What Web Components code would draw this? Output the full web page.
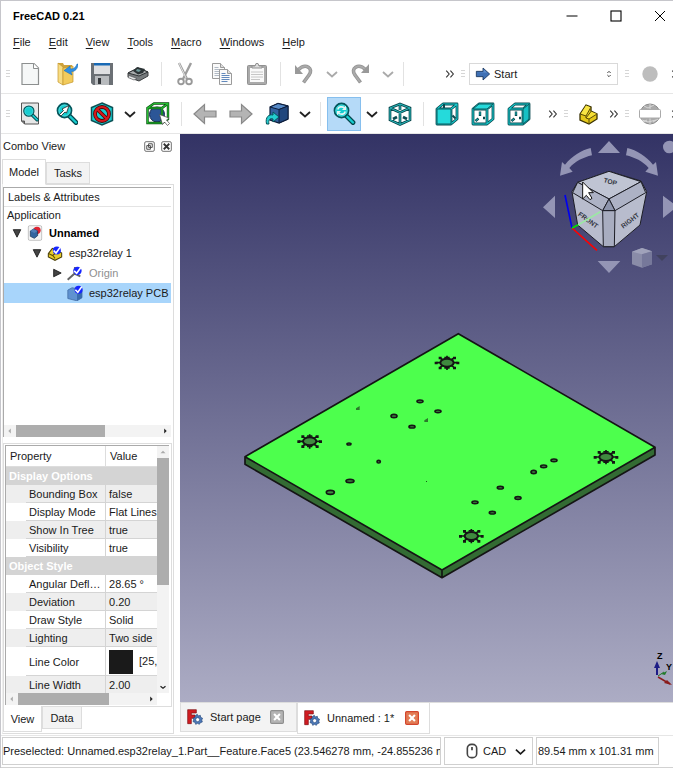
<!DOCTYPE html>
<html lang="en">
<head>
<meta charset="utf-8">
<title>FreeCAD 0.21</title>
<style>
html,body{margin:0;background:#fff}
body{font:11px/16px "Liberation Sans",Arial,sans-serif;color:#1a1a1a}
</style>
</head>
<body>
<fc-app></fc-app>
<script>
const RESET = `*,:host{box-sizing:border-box}button,select{font:inherit;color:inherit;background:none;border:0;padding:0;margin:0}`;
function define(name, html, setup) {
  const t = document.createElement('template');
  t.innerHTML = html.replace('<style>', '<style>' + RESET);
  customElements.define(name, class extends HTMLElement {
    constructor() {
      super();
      this.attachShadow({ mode: 'open' }).append(t.content.cloneNode(true));
    }
    connectedCallback() { if (setup) setup(this, this.shadowRoot); }
  });
}

const T = '#17cdd0', D = '#0b4a50';
const glass = `<path d="M14 13.500L21 20.500" stroke="#04464c" stroke-width="4.800" stroke-linecap="round"/><path d="M14.500 14L21 20.500" stroke="${T}" stroke-width="2.400" stroke-linecap="round"/><circle cx="9.500" cy="8.500" r="7" fill="${T}" stroke="#04565c" stroke-width="1.800"/><circle cx="9.500" cy="8.500" r="5.600" fill="none" stroke="#62e4e4" stroke-width=".8"/>`;
const cubeEdges = `<path d="M2 7L8 2H22V17L16 22H2Z M2 7H16V22 M16 7L22 2" fill="none" stroke="${D}" stroke-width="2.800" stroke-linejoin="round"/><path d="M2 7L8 2H22V17L16 22H2Z M2 7H16V22 M16 7L22 2" fill="none" stroke="${T}" stroke-width="1.100"/>`;
const cubeInner = `<path d="M9 9.500V14M12 16H14M4.500 19L7.500 16.500" stroke="${D}" stroke-width="2.400" fill="none"/><path d="M9 10V13M5 18.500L7 17" stroke="${T}" stroke-width=".8" fill="none"/>`;
const check = (x, y) => `<circle cx="${x}" cy="${y}" r="5" fill="#1726ff"/><path d="M${x - 4} ${y}L${x - 1} ${y + 3}L${x + 4} ${y - 4}" fill="none" stroke="#fff" stroke-width="2"/>`;
const fold = (x, y, b) => `<path d="M${x} ${y}h8l4 4v11h-12z" fill="#fafafa" stroke="#9b9b9b"/><path d="M${x + 8} ${y}v4h4" fill="#ddd" stroke="#9b9b9b"/><path d="M${x + 2} ${y + 4}h4m-4 2h8m-8 2h8m-8 2h8m-8 2h6" stroke="${b}"/>`;
const ICONS = {
  new: `<path d="M4 1.500H16L20.500 6V22.500H4Z" fill="#f5f7f7" stroke="#8c8f8f" stroke-width="1.200"/><path d="M15.500 1.500V6.500H20.500" fill="#fff" stroke="#8c8f8f"/>`,
  open: `<path d="M4 1H9L10 3H18V20H4Z" fill="#cda13b"/><path d="M4 1L9 5V23L4 20Z" fill="#f7dc83" stroke="#c4962b" stroke-width=".7"/><path d="M9 6L19 4V20L9 23Z" fill="#f2cb5c" stroke="#c4962b" stroke-width=".7"/><path d="M24 2C24 7 21 9.500 17 9.800L18 13L10 8.500L16 4L16.400 7C20 7 22 5 23 2Z" fill="#2d8fe4" stroke="#1767b0" stroke-width=".5"/>`,
  save: `<path d="M1 1H23V23H3L1 21Z" fill="#6b7075"/><path d="M4 1H20V12H4Z" fill="#dedfe1"/><path d="M4 1H20V3.500H4Z" fill="#1869b5"/><path d="M5 14H19V23H5Z" fill="#b8bbbe"/><path d="M8 16H11V22H8Z" fill="#34383c"/>`,
  print: `<path d="M2 11L12 6L22 10V14L13 19L2 15Z" fill="#777b7d" stroke="#3c3f41"/><path d="M2 11L12 6L22 10L13 14Z" fill="#a9adae" stroke="#303436"/><path d="M7 9L11 5L19 7L17 11L12 12.500Z" fill="#2b3335"/><path d="M11 7L15 8L13 10L10 9Z" fill="#719a9b"/><path d="M3 13.500L11 16.500L8 18L2 15.500Z" fill="#e2e4e4" stroke="#4b4e50" stroke-width=".6"/>`,
  cut: `<path d="M6 1L14 17M18 1L10 17" stroke="#9e9e9e" stroke-width="2.400"/><path d="M6 1L13 16" stroke="#e3e3e3" stroke-width="1"/><circle cx="8" cy="19.500" r="2.800" fill="none" stroke="#999" stroke-width="1.900"/><circle cx="16" cy="19.500" r="2.800" fill="none" stroke="#999" stroke-width="1.900"/>`,
  copy: fold(3.5, 1.5, '#b1bac5') + fold(10.5, 7.5, '#6289bc'),
  paste: `<rect x="2.500" y="3.500" width="19" height="19" rx="1" fill="#aaa" stroke="#919191"/><path d="M5 6H19V20H5Z" fill="#f9f9f9"/><path d="M6 10h12M6 12.500h12M6 15h12M6 17.500h9" stroke="#c6c6c6"/><path d="M7 6V4H10L11 1.500H13L14 4H17V6Z" fill="#ddd" stroke="#919191"/>`,
  undo: `<path d="M6 8C14 0 22 7 17 13L11.500 20.500" fill="none" stroke="#929292" stroke-width="3.600"/><path d="M6 8C14 0 22 7 17 13L12 20" fill="none" stroke="#aaa" stroke-width="2"/><path d="M3 3V12H11Z" fill="#999"/>`,
  redo: `<path d="M18 8C10 0 2 7 7 13L12.500 20.500" fill="none" stroke="#929292" stroke-width="3.600"/><path d="M18 8C10 0 2 7 7 13L12 20" fill="none" stroke="#aaa" stroke-width="2"/><path d="M21 2V11H13Z" fill="#999"/>`,
  fitall: `<path d="M3.500 1H20.500V22H6.500L3.500 19Z" fill="#e7e7e7" stroke="#555"/><path d="M3.500 19H6.500V22" fill="#777" stroke="#555"/><g transform="translate(4 3) scale(.72)">${glass}</g>`,
  fitsel: `<g transform="translate(1)">${glass}<path d="M4.500 12.500L8.500 8.500L7 7L14 3.500L11.500 11L10 10L6 14Z" fill="#fff" stroke="#222" stroke-width=".8"/></g>`,
  style: `<path d="M12 1L22.500 5.500V18.500L12 23L1.500 18.500V5.500Z" fill="${T}" stroke="#0c5155" stroke-width="1.500"/><circle cx="12" cy="12" r="7" fill="none" stroke="#4b0505" stroke-width="3.800"/><path d="M7 7L17 17" stroke="#4b0505" stroke-width="3.800"/><circle cx="12" cy="12" r="7" fill="none" stroke="#d8181c" stroke-width="2.200"/><path d="M7 7L17 17" stroke="#d8181c" stroke-width="2.200"/>`,
  select: `<circle cx="11" cy="12.500" r="7.500" fill="#2c5697" stroke="#142a51"/><path d="M1.500 6L8 1.500H22V17L16 21H1.500Z M1.500 6H16V21M16 6L22 1.500" fill="none" stroke="#084a0c" stroke-width="2.400"/><path d="M1.500 6L8 1.500H22V17L16 21H1.500Z M1.500 6H16V21M16 6L22 1.500" fill="none" stroke="#25bd32" stroke-width="1.200"/><path d="M13.500 12.500L23 16L20.500 18L23.500 21.500L21.500 23.500L18.500 20L16.500 22.500Z" fill="#fff" stroke="#444" stroke-width=".7"/>`,
  back: `<path d="M1 12L11.500 2.500V9H23V15H11.500V21.500Z" fill="#b4b4b4" stroke="#898989" stroke-width="1.200"/>`,
  forward: `<path d="M23 12L12.500 2.500V9H1V15H12.500V21.500Z" fill="#b4b4b4" stroke="#898989" stroke-width="1.200"/>`,
  link: `<path d="M5 5L13 1.500L23 4V17L14 21L5 18Z" fill="#33619f" stroke="#0c1c3a" stroke-width="1.200"/><path d="M5 5L13 1.500L23 4L14 7.500Z" fill="#5689c6" stroke="#0c1c3a"/><path d="M14 7.500L23 4V17L14 21Z" fill="#21477d" stroke="#0c1c3a"/><path d="M1.500 22C0 15 4 12 8 13V10L14 15L8 20V17C5 16 3 18 4 22Z" fill="#24cdd0" stroke="#05545a"/>`,
  sync: glass + `<path d="M6 7.500C6 4.500 10.500 4 12.500 6M13 9.500C13 12.500 8.500 13 6.500 11" fill="none" stroke="#e6f4f4" stroke-width="1.700"/><path d="M14 3.500V8H10ZM5 13.500V9H9Z" fill="#e6f4f4"/>`,
  iso: `<path d="M12 2L22 6V18L12 22.500L2 18V6ZM2 6L12 10.500L22 6M12 10.500V22.500M12 2V8M5 17L9 15M19 17L15 15" fill="none" stroke="${D}" stroke-width="2.700"/><path d="M12 2L22 6V18L12 22.500L2 18V6ZM2 6L12 10.500L22 6M12 10.500V22.500M12 2V8" fill="none" stroke="#27b9bc" stroke-width="1"/>`,
  front: cubeEdges + `<path d="M2 7H16V22H2Z" fill="#25dadb" stroke="#0c5a5e" stroke-width="1"/><path d="M9 2V6M17.500 13.500L20.500 16.500" stroke="${D}" stroke-width="2"/>`,
  top: cubeEdges + cubeInner + `<path d="M2 7L8 2H22L16 7Z" fill="#25dadb" stroke="#0c5a5e"/>`,
  right: cubeEdges + cubeInner + `<path d="M16 7L22 2V17L16 22Z" fill="#16c0c4" stroke="#0c5a5e"/>`,
  part: `<path d="M3 12L9 3L14 5V9L20 12V17L12 22L3 18Z" fill="#e5c81a" stroke="#3a3204" stroke-width="1.300"/><path d="M4 11.500L9 3.500L14 5.500L9 13.500Z" fill="#f8e544"/><path d="M9 14L14 9.500L20 12L12 17L9 16Z" fill="#f6df35"/><path d="M3 12L9 14V16L12 17V22M9 14L14 5M9 16L14 9.500M12 17L20 12" fill="none" stroke="#5d4e07"/>`,
  globe: `<circle cx="12" cy="12" r="10" fill="#aaa" stroke="#8e8e8e"/><path d="M6 4L10 6L16 3M4 18L10 20L18 18M12 2V22M5 20L9 18M15 20L20 17" stroke="#d7d7d7"/><rect x="1.500" y="7.500" width="21" height="8.500" rx="1" fill="#fff" stroke="#aaa"/>`,
  record: `<circle cx="12" cy="12" r="7.700" fill="#bdbdbd"/>`,
  arrow: `<path d="M2 8H12V3L22 12L12 21V16H2Z" fill="#3f70b4" stroke="#122e55" stroke-width="1.200"/><path d="M3 9H13V5L18 10Z" fill="#5f8fce"/>`,
  chevron: `<path d="M2 8L12 17L22 8" fill="none" stroke="currentColor" stroke-width="3.600"/>`,
  more: `<path d="M3 4L10 12L3 20M13 4L20 12L13 20" fill="none" stroke="#333" stroke-width="2.600"/>`,
  updown: `<path d="M7 9L12 4L17 9M7 15L12 20L17 15" fill="none" stroke="#222" stroke-width="2.500"/>`,
  left: `<path d="M14 6L8 12L14 18Z" fill="currentColor"/>`,
  rightsm: `<path d="M10 6L16 12L10 18Z" fill="currentColor"/>`,
  upsm: `<path d="M6 15L12 9L18 15Z" fill="currentColor"/>`,
  downsm: `<path d="M6 10L12 15L18 10" fill="none" stroke="currentColor" stroke-width="3"/>`,
  triopen: `<path d="M3 4H21L12 22Z" fill="#444" stroke="#151515" stroke-width="2"/>`,
  triclosed: `<path d="M4 3V21L22 12Z" fill="#444" stroke="#151515" stroke-width="2"/>`,
  doc: `<rect x="2" y="1" width="20" height="22" rx="2" fill="#f4f4f4" stroke="#aaa"/><circle cx="15" cy="8" r="5.500" fill="#df2432"/><path d="M5 9L10 6L16 9V16L11 20L5 17Z" fill="#34659f" stroke="#102b4b"/><path d="M5 9L10 6L16 9L11 12Z" fill="#527fb8"/>`,
  treepart: `<path d="M2 13L8 5L15 8L22 12V18L12 23L2 18Z" fill="#e9cd2b" stroke="#4b4008" stroke-width="1.600"/><path d="M3 13L9 16L12 20M9 15L18 9" fill="none" stroke="#5d4e07" stroke-width="1.600"/><g transform="translate(-2 0) scale(1.200)">${check(14, 7)}</g>`,
  origin: `<path d="M1 22L11 13L12 3M11 13L20 17" stroke="#666" stroke-width="3" fill="none"/><g transform="translate(-3 0) scale(1.250)">${check(15, 7)}</g>`,
  treebox: `<g transform="translate(0 3) scale(1.250 1.150)"><path d="M1 4L6 1L18 3V14L12 18L1 15Z" fill="#5f92d0" stroke="#426da5"/><path d="M12 6L18 3V14L12 18Z" fill="#3a6dad"/></g><g transform="scale(1.200)">${check(14.5, 6)}</g>`,
  float: `<rect x="1.500" y="1.500" width="21" height="21" rx="3" fill="none" stroke="#666" stroke-width="2"/><path d="M10 6H18V14H10ZM6 10H14V18H6Z" fill="#fff" stroke="#444" stroke-width="2"/>`,
  close: `<rect x="1.500" y="1.500" width="21" height="21" rx="3" fill="none" stroke="#666" stroke-width="2"/><path d="M6 6L18 18M18 6L6 18" stroke="#333" stroke-width="4"/>`,
  tabclose: `<rect x="1" y="1" width="22" height="22" rx="2" fill="#b4b4b4" stroke="#8f8f8f" stroke-width="2"/><path d="M7 7L17 17M17 7L7 17" stroke="#fff" stroke-width="3.600"/>`,
  tabclosered: `<rect x="1" y="1" width="22" height="22" rx="2" fill="#e27c55" stroke="#d3452c" stroke-width="2"/><path d="M7 7L17 17M17 7L7 17" stroke="#fff" stroke-width="3.600"/>`,
  logo: `<path d="M1 1H14V6H6.500V9H12V14H6.500V22H1Z" fill="#d01c22" stroke="#7c0e12"/><path d="M15.500 8L17 10.500L20 9.500L20.500 12.500L23.500 14L22 16.500L23 19.500L20 20.500L18.500 23L16 21.500L13 23L12 20L9 19L10 16L9 13.500L12 12.500L13 9.500Z" fill="#4b78b8" stroke="#294a7c"/><circle cx="16" cy="16" r="3" fill="#fff" stroke="#294a7c"/>`,
  mouse: `<rect x="5" y="2" width="14" height="20" rx="6" fill="none" stroke="#444" stroke-width="2.400"/><path d="M12 6V11" stroke="#444" stroke-width="2.600"/>`,
  min: `<path d="M1 12H23" stroke="#000" stroke-width="2"/>`,
  max: `<rect x="2" y="2" width="20" height="20" fill="none" stroke="#000" stroke-width="2.200"/>`,
  x: `<path d="M2 2L22 22M22 2L2 22" stroke="#000" stroke-width="2"/>`,
};
define('fc-icon', `<style>:host{display:block;flex:none;width:var(--s,24px);height:var(--s,24px)}svg{display:block;width:100%;height:100%}</style><svg viewBox="0 0 24 24" fill="none" aria-hidden="true"></svg>`,
  (h, r) => { r.querySelector('svg').innerHTML = ICONS[h.getAttribute('name')]; });

define('fc-tool', `<style>
:host{display:flex;flex:none;width:36px;height:36px;color:#222}
:host([menu]){width:20px;--s:12px}:host([off]){color:#aaa}
:host([more]){width:18px;--s:10px}
:host([last]){margin:0 -12px 0 -1px}
:host([edge]){margin-left:1px}
button{flex:1;display:flex;align-items:center;justify-content:center;margin:1px}
:host([on]) button{background:#b5daf8;border:1px solid #86bfee}
</style><button><fc-icon></fc-icon></button>`, (h, r) => {
  const n = h.getAttribute('name');
  r.querySelector('button').setAttribute('aria-label', h.getAttribute('label') || n);
  const i = document.createElement('fc-icon'); i.setAttribute('name', n);
  r.querySelector('fc-icon').replaceWith(i);
});
define('fc-sep', `<style>:host{display:block;flex:none;width:11px;height:24px;padding-left:5px}i{display:block;width:1px;height:100%;background:#e2e2e2}</style><i></i>`);
define('fc-grip', `<style>:host{display:grid;flex:none;gap:2px;width:8px;padding:0 2px}i{height:1px;background:#d6d6d6}</style><i></i><i></i><i></i>`);
define('fc-toolbar', `<style>:host{display:flex;flex:none;align-items:center;height:40px;padding-left:3px;border-bottom:1px solid #e6e6e6;overflow:hidden}</style><slot></slot>`);

define('fc-titlebar', `<style>
:host{display:flex;flex:none;align-items:center;justify-content:space-between;height:30px;padding:0 7px 0 12px;font-weight:bold;color:#000}
nav{display:flex;gap:32px;--s:12px}
</style><slot></slot><nav><button aria-label="Minimize"><fc-icon name="min"></fc-icon></button><button aria-label="Maximize"><fc-icon name="max"></fc-icon></button><button aria-label="Close"><fc-icon name="x"></fc-icon></button></nav>`);
define('fc-menubar', `<style>:host{display:flex;flex:none;gap:18px;height:23px;padding:0 0 1px 12px;align-items:center}u{text-underline-offset:2px}</style>
<button><u>F</u>ile</button><button><u>E</u>dit</button><button><u>V</u>iew</button><button><u>T</u>ools</button><button><u>M</u>acro</button><button><u>W</u>indows</button><button><u>H</u>elp</button>`);
define('fc-workbench', `<style>:host{display:flex;flex:none;align-items:center;width:149px;height:22px;border:1px solid #d9d9d9;padding:0 4px 0 5px;margin-left:2px;--s:16px}
select{flex:1;appearance:none;padding-left:3px;outline:0}fc-icon:last-child{--s:8px}</style><fc-icon name="arrow"></fc-icon><select aria-label="Workbench"><option>Start</option></select><fc-icon name="updown"></fc-icon>`);

define('fc-hscroll', `<style>:host{display:flex;flex:none;align-items:center;height:12px;background:#f3f3f3;--s:10px;color:#aaa}
div{flex:1;height:100%;display:flex}i{width:var(--w,65%);background:#adadad}fc-icon:last-child{color:#222}fc-icon{margin:0 1px}</style><fc-icon name="left"></fc-icon><div><i></i></div><fc-icon name="rightsm"></fc-icon>`);
define('fc-vscroll', `<style>:host{display:flex;flex:none;flex-direction:column;align-items:center;width:12px;background:#f3f3f3;--s:10px;color:#aaa}
div{flex:1;width:100%}i{display:block;height:57%;background:#adadad}fc-icon:last-child{color:#222}fc-icon{margin:1px}</style><fc-icon name="upsm"></fc-icon><div><i></i></div><fc-icon name="downsm"></fc-icon>`);

define('fc-node', `<style>:host{display:flex;flex:none;align-items:center;height:20px;padding-left:calc(8px + 20px * var(--d,0));--s:16px;white-space:nowrap}
:host([on]){background:#a8d5fb}:host([dim]){color:#8f8f8f}:host([bold]){font-weight:bold;color:#000}
.t{--s:10px;width:10px;height:10px;margin-right:5px}.n{width:16px;margin-right:6px}</style><span class="t"></span><span class="n"></span><slot></slot>`, (h, r) => {
  h.style.setProperty('--d', h.getAttribute('depth'));
  const add = (q, n) => { if (n) { const i = document.createElement('fc-icon'); i.setAttribute('name', n); r.querySelector(q).append(i); } };
  add('.t', h.getAttribute('tri')); add('.n', h.getAttribute('icon'));
});
define('fc-tree', `<style>:host{display:flex;flex:none;flex-direction:column;height:250px;border:1px solid #aaa;border-width:1px 0 0 1px;background:#fff;overflow:hidden}
header{flex:none;height:19px;line-height:19px;padding-left:4px;border-bottom:1px solid #e4e4e4}
.a{flex:none;line-height:16px;padding-left:3px}.f{flex:1}fc-hscroll{--w:62%}</style>
<header>Labels &amp; Attributes</header><div class="a">Application</div>
<fc-node depth="0" tri="triopen" icon="doc" bold>Unnamed</fc-node>
<fc-node depth="1" tri="triopen" icon="treepart">esp32relay 1</fc-node>
<fc-node depth="2" tri="triclosed" icon="origin" dim>Origin</fc-node>
<fc-node depth="2" icon="treebox" on>esp32relay PCB</fc-node>
<div class="f"></div><fc-hscroll></fc-hscroll>`);

const rows = [['Display Options'], ['Bounding Box', 'false', 'o'], ['Display Mode', 'Flat Lines'], ['Show In Tree', 'true', 'o'], ['Visibility', 'true'], ['Object Style'],
  ['Angular Defl…', '28.65 °'], ['Deviation', '0.20', 'o'], ['Draw Style', 'Solid'], ['Lighting', 'Two side', 'o'], ['Line Color', '<i></i>[25,', 'tall'], ['Line Width', '2.00', 'o']];
const body = rows.map(([name, value, cls = '']) => value === undefined
  ? `<tr class="c"><th colspan="3" scope="rowgroup">${name}</th></tr>`
  : `<tr class="${cls}"><td></td><td>${name}</td><td>${value}</td></tr>`).join('');
define('fc-props', `<style>:host{display:flex;flex-direction:column;flex:1;min-height:0;border:1px solid #aaa;border-width:1px 0 0 1px;overflow:hidden;background:#fff}
.m{display:flex;flex:1;min-height:0}.w{flex:1;min-width:0;overflow:hidden}
table{border-collapse:separate;border-spacing:0;table-layout:fixed;width:100%}
col:nth-child(1){width:20px}col:nth-child(2){width:80px}
td,th{height:18px;padding:0 0 0 3px;line-height:18px;white-space:nowrap;overflow:hidden;text-align:left;font-weight:normal}
td{padding-top:1px;line-height:16px}
thead th{height:21px;line-height:20px;border-bottom:1px solid #ddd}thead th:first-child{padding-left:4px;border-right:1px solid #ddd}thead th:last-child{padding-left:4px}
td:nth-child(2){border-right:1px solid #d4d4d4}td+td{border-bottom:1px solid #d4d4d4}
.o td{background:#eee}.c th{background:#d4d4d4;color:#fff;font-weight:bold}
.tall td{height:29px}i{display:inline-block;width:24px;height:24px;background:#1a1a1a;vertical-align:middle;margin-right:6px}
fc-hscroll{--w:72%;margin-right:12px}</style>
<div class="m"><div class="w"><table><colgroup><col><col><col></colgroup><thead><tr><th colspan="2">Property</th><th>Value</th></tr></thead><tbody>${body}</tbody></table></div><fc-vscroll></fc-vscroll></div><fc-hscroll></fc-hscroll>`);

define('fc-combo', `<style>
:host{display:flex;flex-direction:column;min-height:0;padding:0 6px 1px 1px}
header{flex:none;display:flex;align-items:center;height:25px;padding:0 2px 1px 1px;gap:6px;--s:11px}header span{flex:1}
.tabs{flex:none;display:flex;align-items:flex-end;position:relative;height:25px}
.tabs button{width:44px;height:22px;background:#f3f3f3;border:1px solid #ddd}.tabs .on{background:#fff;height:26px;border-bottom-color:#fff;margin-bottom:-1px}
.pane{flex:1;min-height:0;display:flex;flex-direction:column;border:1px solid #ddd;border-left-color:#eee;padding:2px 2px 0 0}
fc-tree{margin-bottom:6px}
.box{flex:1;min-height:0;display:flex;flex-direction:column;border:1px solid #ddd;padding:1px 2px 1px 1px;margin-right:-1px}
.low{flex:none;display:flex;align-items:flex-start;height:26px}.low button{width:40px;height:22px;background:#f3f3f3;border:1px solid #ddd;border-top:0}.low .on{background:#fff;height:26px;margin-top:-1px;width:39px}
</style><header><span>Combo View</span><button aria-label="Float"><fc-icon name="float"></fc-icon></button><button aria-label="Close panel"><fc-icon name="close"></fc-icon></button></header>
<div class="tabs"><button class="on">Model</button><button>Tasks</button></div>
<div class="pane"><fc-tree></fc-tree><div class="box"><fc-props></fc-props></div><div class="low"><button class="on">View</button><button>Data</button></div></div>`);

const mount = (x, y) => `<g transform="translate(${x} ${y})"><g fill="#141414"><path d="M-32 0h14M18 0h14M-21 -14l9 6M21 -14l-9 6M-21 14l9 -6M21 14l-9 -6M0 -21v10M0 11v11" stroke="#141414" stroke-width="5"/><path d="M-37 -3h9v8h-9zM28 -3h9v8h-9zM-25 -18h9v8h-9zM18 -18h9v8h-9zM-25 12h9v8h-9zM18 12h9v8h-9zM-8 -14H8V-18H-8zM-8 18H8V13H-8z"/></g><ellipse rx="20" ry="12" fill="#3f8a3f" stroke="#141414" stroke-width="6"/></g>`;
const hole = (x, y, r = 9, q = 4) => `<ellipse cx="${x}" cy="${y}" rx="${r}" ry="${q}" fill="#3d923f" stroke="#151515" stroke-width="5"/>`;
define('fc-view', `<style>:host{display:block;min-height:0;overflow:hidden;background:linear-gradient(#333365,#acacc4)}svg{display:block;width:100%;height:100%}text{font-family:"Liberation Sans",Arial,sans-serif}</style>
<svg viewBox="180 134 493 568" role="img" aria-label="3D view of the board">
<g transform="translate(235 320) scale(.33333)">
<path d="M30 410V433L621 773L1260 405V382L621 750Z" fill="#336b33"/><path d="M30 410L670 41L1260 382L621 750Z" fill="#4dff4d"/>
<path d="M30 410L670 41L1260 382L621 750ZM30 410V433L621 773L1260 405V382M621 750V773" fill="none" stroke="#141414" stroke-width="5" stroke-linejoin="round"/>
${mount(636, 128)}${mount(224, 364)}${mount(709, 648)}${mount(1113, 411)}
${hole(555, 244)}${hole(609, 274)}${hole(477, 288, 9, 5)}${hole(531, 320)}${hole(342, 372, 6, 3)}${hole(431, 425, 5, 4)}${hole(345, 483, 12, 5)}${hole(286, 517, 12, 6)}
${hole(957, 421)}${hole(926, 439)}${hole(896, 456, 8, 5)}${hole(796, 503)}${hole(849, 534)}${hole(720, 547)}${hole(772, 578)}
<path d="M363 265L374 258V270H363ZM568 301L579 294V306H568Z" fill="#2b7a2b"/><rect x="573" y="483" width="3" height="3" fill="#155a15"/>
</g>
<g transform="translate(530 130) scale(.33333)">
<g fill="#9495b5"><path d="M204 69L237 33L270 69ZM203 393H271L237 429ZM39 232L75 197V264ZM399 197V264L429 240V220ZM182 54L186 76C160 82 135 94 118 114L128 125L90 137L96 96L105 104C126 78 154 61 182 54ZM292 54L288 76C314 82 339 94 356 114L346 125L384 137L378 96L369 104C348 78 320 61 292 54Z"/><circle cx="418" cy="51" r="19"/></g>
<g stroke="#1c1d25" stroke-width="3" stroke-linejoin="round"><path d="M237 124L333 153L350 185L330 285L253 350H220L143 285L126 185L143 157Z" fill="#b8bccd"/><path d="M143 157L237 124L333 155L237 207Z" fill="#bfc4d3"/><path d="M143 157L237 207L218 242L128 188ZM333 155L237 207L255 242L347 188Z" fill="#adb2c5"/><path d="M237 207L218 242H255Z" fill="#8d94ac"/><path d="M218 242L220 350H253L255 242Z" fill="#a8adc0"/></g>
<g fill="#333641" font-weight="bold"><text x="220" y="162" font-size="20" transform="rotate(14 240 158)">TOP</text><text x="144" y="256" font-size="20" transform="rotate(36 144 254)">FRONT</text><text x="280" y="296" font-size="20" transform="rotate(-38 280 296)">RIGHT</text></g>
<g stroke-width="5" fill="none"><path d="M126 294L105 195" stroke="#0000f0"/><path d="M126 294L201 361" stroke="#f00"/><path d="M126 294L145 284" stroke="#00e000"/><path d="M145 284L211 245" stroke="#9be8a4"/></g>
<path d="M158 156V207L169 196L180 209L186 205L176 188H190Z" fill="#fff" stroke="#111" stroke-width="3"/>
<path d="M306 365L336 354L366 364V403L336 413L306 403Z" fill="#8a8ca8"/><path d="M306 365L336 354L366 364L336 373Z" fill="#a0a2ba"/><path d="M336 373L366 364V403L336 413Z" fill="#76789a"/><path d="M378 375H414L396 393Z" fill="#41425e"/>
</g>
<path d="M657 675V664" stroke="#1c1c86" stroke-width="2"/><path d="M654 668L657 661L660 668Z" fill="#1c1c86"/><path d="M658 676L664 672" stroke="#227a2a"/><path d="M661 674L667 671L665 675Z" fill="#227a2a"/><path d="M658 677L670 684" stroke="#8a1c1c" stroke-width="1.500"/><path d="M664 683L672 685L667 680Z" fill="#8a1c1c"/>
<text x="657" y="659" font-size="9" font-weight="bold">Z</text><text x="666" y="670" font-size="9" font-weight="bold">Y</text>
</svg>`);

define('fc-doctabs', `<style>:host{display:flex;flex:none;align-items:flex-start;height:33px;border-top:1px solid #ddd}
div{display:flex;align-items:center;gap:7px;height:29px;padding:0 12px 0 6px;background:#f3f3f3;border:1px solid #ddd;border-top:0;width:117px}
div fc-icon{--s:16px}button:last-child fc-icon{--s:14px}.t{flex:1;text-align:left;white-space:nowrap}
.on{background:#fff;height:31px;width:133px;padding:0 10px 0 6px}</style>
<div><fc-icon name="logo"></fc-icon><button class="t">Start page</button><button aria-label="Close Start page"><fc-icon name="tabclose"></fc-icon></button></div>
<div class="on"><fc-icon name="logo"></fc-icon><button class="t">Unnamed : 1*</button><button aria-label="Close Unnamed"><fc-icon name="tabclosered"></fc-icon></button></div>`);

define('fc-status', `<style>:host{display:flex;flex:none;gap:3px;height:33px;padding:1px 14px 2px 1px;border-top:1px solid #e6e6e6;border-bottom:1px solid #d2d2d2}
div,button{height:28px;border:1px solid #d0d0d0;display:flex;align-items:center;white-space:nowrap;overflow:hidden}
.msg{flex:1;min-width:0}button{width:89px;padding-left:19px;gap:3px;--s:16px}button fc-icon:last-child{--s:11px;margin-left:6px}.dim{width:123px;padding-left:1px}</style>
<div class="msg">Preselected: Unnamed.esp32relay_1.Part__Feature.Face5 (23.546278 mm, -24.855236 mm)</div><button><fc-icon name="mouse"></fc-icon>CAD<fc-icon name="chevron"></fc-icon></button><div class="dim">89.54 mm x 101.31 mm</div>`);

define('fc-app', `<style>
:host{display:flex;flex-direction:column;height:100vh;margin-right:20px;border:1px solid #c6c6cb;border-width:1px 0 0 1px;overflow:hidden}
main{flex:1;min-height:0;display:grid;grid-template:1fr/179px 1fr}
.doc{display:flex;flex-direction:column;min-width:0;min-height:0}fc-view{flex:1}
.grow{flex:1}
.after{margin-left:5px}
.tight{margin:0 -2px 0 1px}
</style>
<fc-titlebar>FreeCAD 0.21</fc-titlebar><fc-menubar></fc-menubar>
<fc-toolbar><fc-grip></fc-grip>
<fc-tool name="new"></fc-tool><fc-tool name="open"></fc-tool><fc-tool name="save"></fc-tool><fc-tool name="print"></fc-tool><fc-sep></fc-sep>
<fc-tool name="cut"></fc-tool><fc-tool name="copy"></fc-tool><fc-tool name="paste"></fc-tool><fc-sep></fc-sep>
<fc-tool name="undo"></fc-tool><fc-tool name="chevron" menu off label="Undo list"></fc-tool><fc-tool name="redo"></fc-tool><fc-tool name="chevron" menu off label="Redo list"></fc-tool><fc-sep></fc-sep>
<span class="grow"></span><fc-tool name="more" more></fc-tool><fc-grip></fc-grip><fc-workbench></fc-workbench>
<fc-grip class="after"></fc-grip><fc-tool name="record" edge></fc-tool><fc-tool name="more" more last></fc-tool></fc-toolbar>
<fc-toolbar><fc-grip></fc-grip>
<fc-tool name="fitall"></fc-tool><fc-tool name="fitsel"></fc-tool><fc-tool name="style"></fc-tool><fc-tool name="chevron" menu label="Draw style list"></fc-tool><fc-tool name="select"></fc-tool><fc-sep></fc-sep>
<fc-tool name="back"></fc-tool><fc-tool name="forward"></fc-tool><fc-tool name="link"></fc-tool><fc-tool name="chevron" menu label="Link list"></fc-tool><fc-sep></fc-sep>
<fc-tool name="sync" on></fc-tool><fc-tool name="chevron" menu label="View list"></fc-tool><fc-tool name="iso"></fc-tool><fc-sep></fc-sep>
<fc-tool name="front"></fc-tool><fc-tool name="top"></fc-tool><fc-tool name="right"></fc-tool>
<span class="grow"></span><fc-tool name="more" more></fc-tool><fc-grip></fc-grip><fc-tool name="part" class="tight"></fc-tool><fc-tool name="more" more></fc-tool>
<fc-grip></fc-grip><fc-tool name="globe" edge></fc-tool><fc-tool name="more" more last></fc-tool></fc-toolbar>
<main><fc-combo></fc-combo><div class="doc"><fc-view></fc-view><fc-doctabs></fc-doctabs></div></main>
<fc-status></fc-status>`);
</script>
</body>
</html>
